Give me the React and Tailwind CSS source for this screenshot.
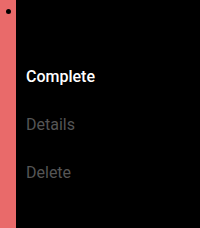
import React from "react";

const items = [
    { label: "Complete", active: true },
    { label: "Details", active: false },
    { label: "Delete", active: false },
];

const App = () => {
    return (
        <div className="flex w-[200px] h-[228px] bg-black">
            {/* action bar strip */}
            <div className="w-[16px] h-full bg-[#e96a6a] flex flex-col items-center pt-[9px]">
                <div className="w-[5px] h-[5px] rounded-full bg-black" />
            </div>
            <div
                className="flex flex-col pl-[10px] pt-[67px] gap-[29px]"
                style={{ fontFamily: 'Roboto, "DejaVu Sans", sans-serif' }}
            >
                {items.map((item) => (
                    <div
                        key={item.label}
                        className={`text-[16px] leading-[19px] ${item.active ? "text-white font-medium" : "text-[#555555]"}`}
                    >
                        {item.label}
                    </div>
                ))}
            </div>
        </div>
    );
};

export default App;
